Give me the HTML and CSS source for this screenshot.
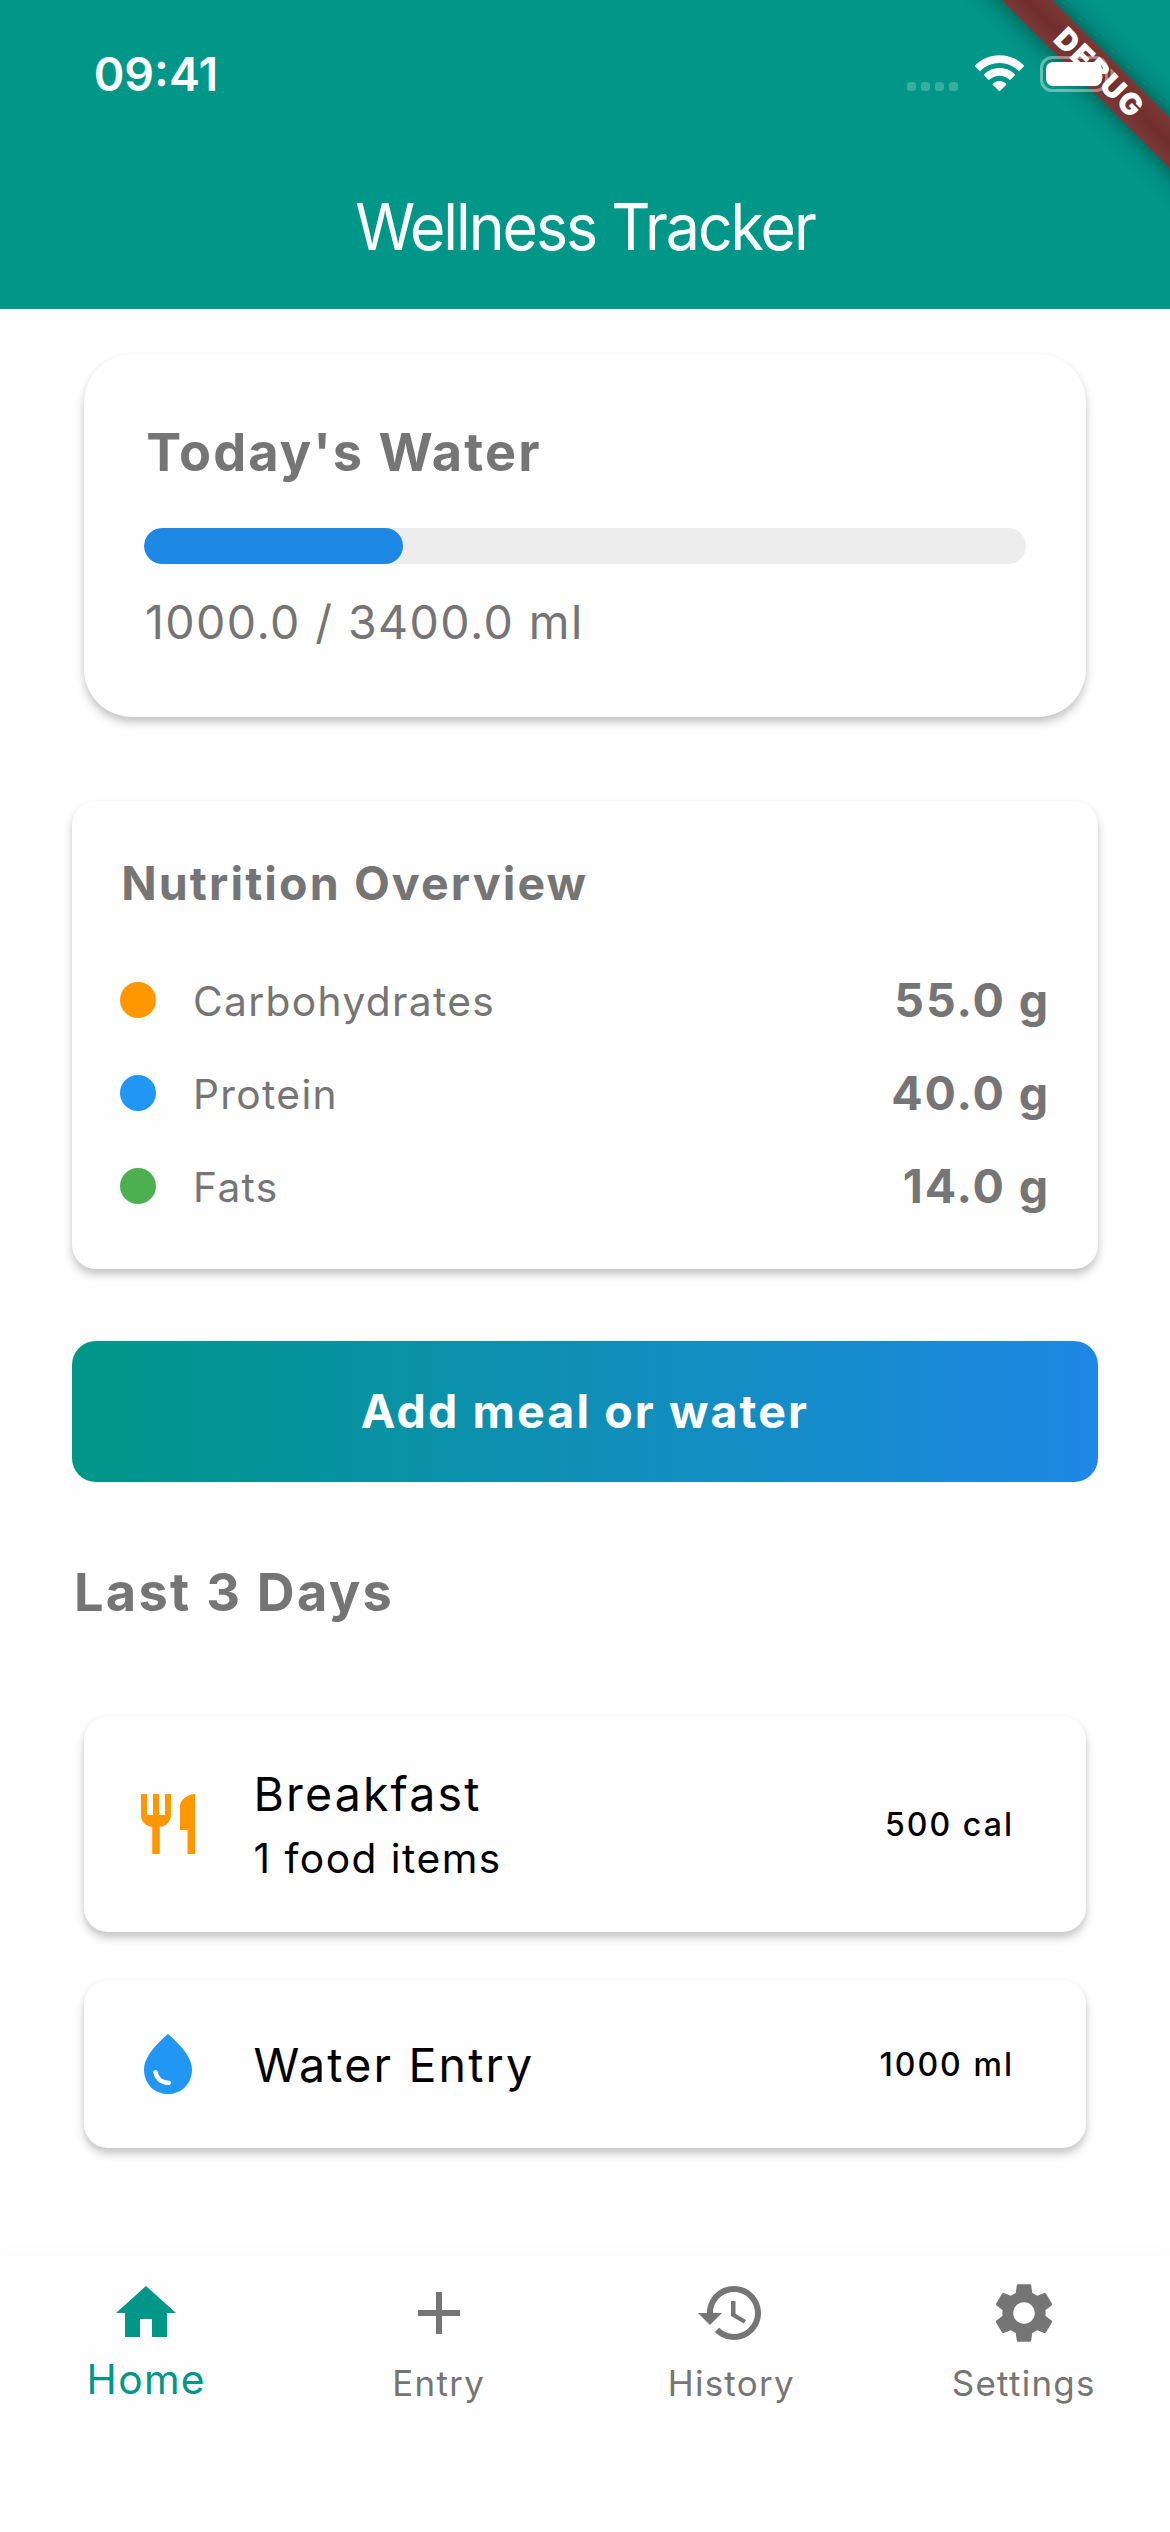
FILE: index.html
```html
<!DOCTYPE html>
<html lang="en">
<head>
<meta charset="utf-8">
<title>Wellness Tracker</title>
<link rel="stylesheet" href="styles.css">
</head>
<body>
<header class="app-bar">
  <div class="status">
    <span class="time">09:41</span>
    <div class="indicators">
      <div class="signal"><i></i><i></i><i></i><i></i></div>
      <svg class="wifi" width="49" height="37" viewBox="0 0 49 37" fill="#fff">
        <path d="M24.5 0.3C34 0.3 42.6 4 48.6 10.2c.5.5.5 1 0 1.5l-3.900 3.900c-.5.5-1 .5-1.500 0C38.300 10.900 31.700 8.100 24.500 8.100S10.700 10.900 5.800 15.600c-.5.5-1 .5-1.500 0L.4 11.700c-.5-.5-.5-1 0-1.500C6.400 4 15 .3 24.500 .3z"/>
        <path d="M24.500 13c5.900 0 11.300 2.300 15.200 6.100.5.500.5 1 0 1.500l-3.900 3.900c-.5.500-1 .500-1.500 0-2.600-2.400-6-3.800-9.800-3.800s-7.200 1.400-9.800 3.800c-.5.500-1 .500-1.500 0l-3.900-3.900c-.5-.5-.5-1 0-1.500 3.900-3.800 9.300-6.100 15.200-6.100z"/>
        <path d="M24.500 26c2.500 0 4.800.9 6.600 2.400.5.500.5 1 0 1.500l-5.900 5.800c-.5.500-.9.500-1.400 0l-5.900-5.800c-.5-.5-.5-1 0-1.500 1.800-1.500 4.100-2.400 6.600-2.400z"/>
      </svg>
      <svg class="battery" width="76" height="36" viewBox="0 0 76 36">
        <rect x="1.500" y="1.500" width="65" height="33" rx="10.500" fill="none" stroke="#fff" stroke-opacity=".4" stroke-width="3"/>
        <path d="M70.500 12.500v11c2.500-1 4-3 4-5.500s-1.500-4.500-4-5.500z" fill="#fff" fill-opacity=".4"/>
        <rect x="6" y="6" width="56" height="24" rx="7" fill="#fff"/>
      </svg>
    </div>
  </div>
  <h1>Wellness Tracker</h1>
  <div class="ribbon"><span>DEBUG</span></div>
</header>

<main>
  <section class="card water">
    <h2>Today's Water</h2>
    <div class="track"><div class="fill" style="width:29.41%"></div></div>
    <p>1000.0 / 3400.0 ml</p>
  </section>

  <section class="card nutrition">
    <h2>Nutrition Overview</h2>
    <ul>
      <li><i class="dot carbs"></i><span>Carbohydrates</span><b>55.0 g</b></li>
      <li><i class="dot protein"></i><span>Protein</span><b>40.0 g</b></li>
      <li><i class="dot fats"></i><span>Fats</span><b>14.0 g</b></li>
    </ul>
  </section>

  <button class="add" type="button">Add meal or water</button>

  <h2 class="section-title">Last 3 Days</h2>

  <article class="card tile meal">
    <svg width="72" height="72" viewBox="0 0 24 24" fill="#ff9800"><path d="M11 9H9V2H7v7H5V2H3v7c0 2.120 1.660 3.840 3.750 3.970V22h2.500v-9.030C11.340 12.840 13 11.120 13 9V2h-2v7zm5-3v8h2.500v8H21V2c-2.760 0-5 2.240-5 4z"/></svg>
    <div class="tile-text"><h3>Breakfast</h3><p>1 food items</p></div>
    <span class="amount">500 cal</span>
  </article>

  <article class="card tile drink">
    <svg width="72" height="72" viewBox="0 0 24 24" fill="#2196f3"><path d="M12 2c-5.330 4.550-8 8.480-8 11.800 0 4.980 3.800 8.200 8 8.200s8-3.220 8-8.200c0-3.320-2.670-7.250-8-11.800zM7.830 14c.37 0 .67.26.74.62.41 2.220 2.280 2.980 3.640 2.870.43-.02.79.32.79.75 0 .4-.32.73-.72.75-2.130.13-4.620-1.090-5.190-4.120-.08-.45.28-.87.74-.87z"/></svg>
    <div class="tile-text"><h3>Water Entry</h3></div>
    <span class="amount">1000 ml</span>
  </article>
</main>

<nav class="tabs">
  <a class="tab active">
    <svg width="72" height="72" viewBox="0 0 24 24"><path d="M10 20v-6h4v6h5v-8h3L12 3 2 12h3v8z"/></svg>
    <span>Home</span>
  </a>
  <a class="tab">
    <svg width="72" height="72" viewBox="0 0 24 24"><path d="M19 13h-6v6h-2v-6H5v-2h6V5h2v6h6v2z"/></svg>
    <span>Entry</span>
  </a>
  <a class="tab">
    <svg width="72" height="72" viewBox="0 0 24 24"><path d="M13 3c-4.970 0-9 4.030-9 9H1l3.890 3.890.07.14L9 12H6c0-3.870 3.130-7 7-7s7 3.130 7 7-3.130 7-7 7c-1.930 0-3.680-.79-4.940-2.060l-1.420 1.420C8.270 19.990 10.510 21 13 21c4.970 0 9-4.030 9-9s-4.030-9-9-9zm-1 5v5l4.280 2.540.72-1.210-3.500-2.080V8H12z"/></svg>
    <span>History</span>
  </a>
  <a class="tab">
    <svg width="72" height="72" viewBox="0 0 24 24"><path d="M19.140 12.940c.04-.3.06-.61.06-.94 0-.32-.02-.64-.07-.94l2.030-1.580c.18-.14.23-.41.12-.61l-1.920-3.320c-.12-.22-.37-.29-.59-.22l-2.390.96c-.5-.38-1.030-.7-1.620-.94l-.36-2.540c-.04-.24-.24-.41-.48-.41h-3.840c-.24 0-.43.17-.47.41l-.36 2.540c-.59.24-1.130.57-1.620.94l-2.390-.96c-.22-.08-.47 0-.59.22L2.740 8.870c-.12.21-.08.47.12.61l2.030 1.580c-.05.3-.09.63-.09.94s.02.64.07.94l-2.030 1.580c-.18.14-.23.41-.12.61l1.920 3.320c.12.22.37.29.59.22l2.390-.96c.5.38 1.030.7 1.620.94l.36 2.540c.05.24.24.41.48.41h3.840c.24 0 .44-.17.47-.41l.36-2.540c.59-.24 1.130-.56 1.620-.94l2.390.96c.22.08.47 0 .59-.22l1.920-3.320c.12-.22.07-.47-.12-.61l-2.010-1.580zM12 15.600c-1.980 0-3.600-1.620-3.600-3.600s1.620-3.600 3.600-3.600 3.600 1.620 3.600 3.600-1.620 3.600-3.600 3.600z"/></svg>
    <span>Settings</span>
  </a>
</nav>
</body>
</html>
```
FILE: styles.css
```css
* { box-sizing: border-box; margin: 0; padding: 0; }

body {
  display: flex;
  flex-direction: column;
  width: 1170px;
  height: 2532px;
  background: #fefefe;
  color: #757575;
  font-family: Inter, "Liberation Sans", sans-serif;
  overflow: hidden;
}

svg { display: block; flex: none; }

/* App bar */
.app-bar {
  position: relative;
  height: 309px;
  flex: none;
  background: #009688;
  color: #fff;
  overflow: hidden;
}
.status {
  position: relative;
  z-index: 1;
  display: flex;
  justify-content: space-between;
  align-items: center;
  height: 141px;
  padding: 7px 54px 0 93.700px;
}
.time { font-size: 46.500px; font-weight: 600; line-height: 60px; }
.indicators { display: flex; align-items: center; }
.signal { display: flex; gap: 5px; margin: 25px 17px 0 0; }
.signal i { width: 9px; height: 9px; border-radius: 3px; background: rgba(255, 255, 255, .22); }
.wifi { margin-right: 16px; margin-top: -1px; }
h1 {
  font-size: 64px;
  font-weight: 400;
  line-height: 171px;
  letter-spacing: -2.150px;
  text-align: center;
  transform: scaleX(.95);
}

/* Diagonal corner ribbon */
.ribbon {
  position: absolute;
  left: 948.500px;
  top: 54px;
  width: 300px;
  height: 36px;
  transform: rotate(45deg);
  background: linear-gradient(#7a3936, #722f2e 45%, #722f2e 55%, #7a3936);
  box-shadow: 0 0 24px rgba(0, 0, 0, .5);
  text-align: center;
}
.ribbon span {
  display: block;
  padding-left: 2px;
  font-size: 30px;
  font-weight: 900;
  line-height: 36px;
  letter-spacing: 1.700px;
}

/* Content */
main { flex: 1; display: flex; flex-direction: column; padding: 45px 72px 0; }
.card {
  background: #fefefe;
  border-radius: 24px;
  box-shadow: 0 6px 8px rgba(0, 0, 0, .2), 0 2px 6px rgba(0, 0, 0, .04);
}

.water { height: 363px; margin: 0 12px; padding: 60px; border-radius: 48px; }
.water h2 { margin-left: 2.200px; font-size: 52.300px; font-weight: 700; line-height: 76px; letter-spacing: 2.070px; }
.track { height: 36px; margin: 38px 0 28px; border-radius: 18px; background: #ededed; overflow: hidden; }
.fill { height: 36px; border-radius: 18px; background: #1e88e5; }
.water p { margin-left: 1px; font-size: 46.500px; line-height: 60px; letter-spacing: 1.420px; }

.nutrition { height: 468px; margin-top: 84px; padding: 48px; }
.nutrition h2 { margin-left: 1.200px; font-size: 46.500px; font-weight: 650; line-height: 68px; letter-spacing: 2.130px; }
.nutrition ul { display: flex; flex-direction: column; gap: 57px; margin-top: 65px; list-style: none; }
.nutrition li { display: flex; align-items: center; height: 36px; }
.dot { width: 36px; height: 36px; margin-right: 37px; border-radius: 50%; }
.carbs { background: #ff9800; }
.protein { background: #2196f3; }
.fats { background: #4caf50; }
.nutrition span { flex: 1; padding-top: 3px; font-size: 40.700px; line-height: 48px; letter-spacing: 1.350px; }
.nutrition b { font-size: 46.500px; font-weight: 650; line-height: 60px; letter-spacing: 1.900px; }

.add {
  height: 141px;
  margin-top: 72px;
  padding-bottom: 2px;
  border: 0;
  border-radius: 24px;
  background: linear-gradient(90deg, #009688, #1e88e5);
  color: #fff;
  font: 650 46.500px/60px Inter, "Liberation Sans", sans-serif;
  letter-spacing: 2.100px;
}

.section-title { margin: 78px 0 92px 2px; font-size: 52.300px; font-weight: 650; line-height: 64px; letter-spacing: 2.280px; }

.tile { display: flex; align-items: center; margin: 0 12px; padding: 0 72px 0 48px; color: #000; }
.meal { height: 216px; }
.drink { height: 168px; margin-top: 48px; }
.tile-text { flex: 1; margin-left: 49.500px; }
.tile h3 { font-size: 46.500px; font-weight: 400; line-height: 56px; letter-spacing: 2.150px; }
.drink h3 { padding-top: 2px; }
.tile p { margin-top: 14px; font-size: 40.700px; line-height: 46px; letter-spacing: 1.470px; }
.amount { padding-top: 2px; font-size: 32px; font-weight: 500; line-height: 48px; letter-spacing: 2.050px; }

/* Bottom navigation */
.tabs {
  display: flex;
  flex: none;
  height: 276px;
  padding-top: 21px;
  background: #fefefe;
  box-shadow: 0 -3px 18px rgba(0, 0, 0, .02);
}
.tab { flex: 1; display: flex; flex-direction: column; align-items: center; fill: #757575; }
.tab span { font-size: 34.900px; line-height: 68px; letter-spacing: 1.300px; }
.tab.active { fill: #009688; color: #009688; }
.tab.active span { font-size: 40.700px; line-height: 61px; letter-spacing: 1.340px; }
```
